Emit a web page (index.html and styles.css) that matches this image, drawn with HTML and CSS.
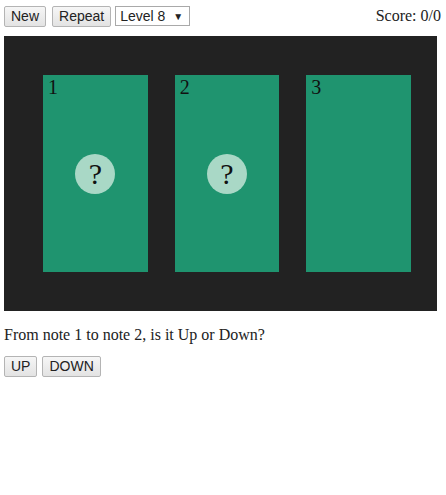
FILE: index.html
```html
<!DOCTYPE html>
<html>
<head>
<meta charset="utf-8">
<link rel="stylesheet" href="styles.css">
</head>
<body>
<div class="toolbar">
  <button class="btn">New</button>
  <button class="btn">Repeat</button>
  <div class="select"><span>Level 8</span><span class="arrow">▼</span></div>
  <div class="score">Score: 0/0</div>
</div>
<div class="stage">
  <div class="card"><span class="num">1</span><div class="q">?</div></div>
  <div class="card"><span class="num">2</span><div class="q">?</div></div>
  <div class="card"><span class="num">3</span></div>
</div>
<p class="prompt">From note 1 to note 2, is it Up or Down?</p>
<div class="answers">
  <button class="btn">UP</button>
  <button class="btn">DOWN</button>
</div>
</body>
</html>
```
FILE: styles.css
```css
html, body { background: #fff; }
body {
  margin: 4px;
  font-family: "Liberation Serif", "Times New Roman", serif;
  font-size: 16px;
  color: #222;
}
.toolbar {
  display: flex;
  align-items: center;
  height: 22px;
  margin-top: 1px;
  margin-bottom: 9px;
}
.btn {
  font-family: "Liberation Sans", Arial, sans-serif;
  font-size: 14px;
  color: #222;
  height: 21px;
  padding: 0 6px;
  margin: 0 6px 0 0;
  border: 1px solid #b4b4b4;
  border-radius: 2px;
  background: linear-gradient(#f6f6f6, #e3e3e3);
  line-height: 19px;
}
.toolbar .btn + .btn { margin-right: 4px; }
.select {
  font-family: "Liberation Sans", Arial, sans-serif;
  font-size: 14px;
  color: #222;
  width: 75px;
  height: 20px;
  box-sizing: border-box;
  border: 1px solid #a9a9a9;
  background: #fff;
  display: flex;
  align-items: center;
  justify-content: space-between;
  padding: 0 6px 0 4px;
}
.arrow { font-size: 10px; }
.score {
  margin-left: auto;
  margin-right: 1px;
  align-self: flex-start;
  margin-top: 2px;
}
.stage {
  background: #222222;
  width: 433px;
  height: 275px;
  box-sizing: border-box;
  padding: 39px 26px 39px 39px;
  display: flex;
  gap: 27px;
}
.card {
  width: 105px;
  height: 197px;
  background: #1f946f;
  position: relative;
  display: flex;
  align-items: center;
  justify-content: center;
}
.num {
  position: absolute;
  left: 5px;
  top: 1px;
  font-size: 20px;
  color: #111;
}
.q {
  width: 40px;
  height: 40px;
  border-radius: 50%;
  background: #a9d8c6;
  color: #111;
  font-size: 30px;
  line-height: 40px;
  text-align: center;
}
.prompt {
  margin: 15px 0 12px 0;
  line-height: 18px;
}
.answers { display: flex; }
.answers .btn { margin-right: 5px; }
```
